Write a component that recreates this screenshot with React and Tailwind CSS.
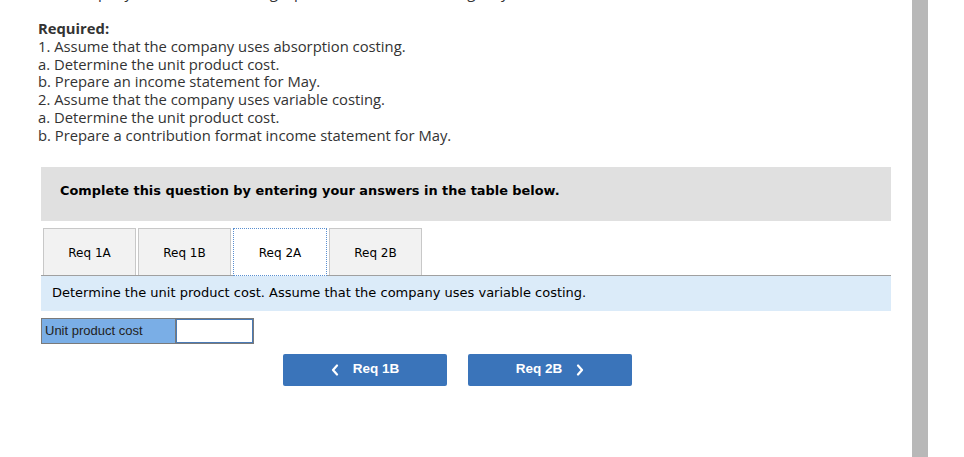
import React from 'react'

const tabs = ['Req 1A', 'Req 1B', 'Req 2A', 'Req 2B']

export default function App() {
  return (
    <div className="relative w-[964px] h-[457px] overflow-hidden bg-white">
      {/* scrollbar strip */}
      <div className="absolute top-0 left-[912px] w-4 h-full bg-[#b8b8b8]" />

      <div className="w-[892px] pl-[38px]">
        <p className="-mt-[17px] h-[17px] text-[15px] leading-[18px] text-[#333] font-['Open_Sans',sans-serif] whitespace-nowrap">
          The company manufactures a single product and sold it during May for the most recent month.
        </p>

        <div className="mt-[20px] text-[14.8px] leading-[17.8px] text-[#333] font-['Open_Sans',sans-serif]">
          <p className="font-bold">Required:</p>
          <p>1. Assume that the company uses absorption costing.</p>
          <p>a. Determine the unit product cost.</p>
          <p>b. Prepare an income statement for May.</p>
          <p>2. Assume that the company uses variable costing.</p>
          <p>a. Determine the unit product cost.</p>
          <p>b. Prepare a contribution format income statement for May.</p>
        </div>
      </div>

      <div className="ml-[41px] w-[850px] mt-[22px]">
        <div className="h-[54px] bg-[#e0e0e0] flex items-center pl-[19px] pb-[5px]">
          <p className="text-[12.9px] font-bold text-black font-['DejaVu_Sans',Verdana,sans-serif]">
            Complete this question by entering your answers in the table below.
          </p>
        </div>

        <div className="mt-[7px] flex gap-[2px] pl-[2px] border-b border-[#a0a0a0] font-['DejaVu_Sans',Verdana,sans-serif] text-[12px]">
          {tabs.map((t, i) =>
            i === 2 ? (
              <div
                key={t}
                className="w-[94px] h-[48px] -mb-px pt-[3px] flex items-center justify-center bg-white text-black border border-dotted border-[#5a8fd0]"
              >
                {t}
              </div>
            ) : (
              <div
                key={t}
                className="w-[93px] h-[47px] pt-[3px] flex items-center justify-center bg-[#f2f2f2] text-black border border-b-0 border-[#c8c8c8]"
              >
                {t}
              </div>
            )
          )}
        </div>

        <div className="h-[35px] bg-[#dbebf9] flex items-center pl-[11px] text-[13px] text-black font-['DejaVu_Sans',Verdana,sans-serif]">
          Determine the unit product cost. Assume that the company uses variable costing.
        </div>

        <div className="mt-[7px] flex w-[213px] h-[26px] border border-[#7a7a7a] font-['Liberation_Sans',Arial,sans-serif] text-[13px]">
          <div className="w-[134px] bg-[#7aaee6] border-r border-[#7a7a7a] flex items-center pl-[3px] text-[#222]">
            Unit product cost
          </div>
          <input className="flex-1 min-w-0 border border-[#4a7ab5] bg-white outline-none" />
        </div>

        <div className="mt-[10px] flex gap-[21px] pl-[242px] font-['Liberation_Sans',Arial,sans-serif] text-[13.5px] font-bold text-white">
          <button className="w-[164px] h-[32px] rounded-[2px] bg-[#3a74ba] flex items-center justify-center gap-[14px]">
            <svg width="8" height="12" viewBox="0 0 8 12" fill="none" stroke="white" strokeWidth="2.2" strokeLinecap="round" strokeLinejoin="round">
              <path d="M6 1.5 L2 6 L6 10.5" />
            </svg>
            <span>Req 1B</span>
          </button>
          <button className="w-[164px] h-[32px] rounded-[2px] bg-[#3a74ba] flex items-center justify-center gap-[14px]">
            <span>Req 2B</span>
            <svg width="8" height="12" viewBox="0 0 8 12" fill="none" stroke="white" strokeWidth="2.2" strokeLinecap="round" strokeLinejoin="round">
              <path d="M2 1.5 L6 6 L2 10.5" />
            </svg>
          </button>
        </div>
      </div>
    </div>
  )
}
